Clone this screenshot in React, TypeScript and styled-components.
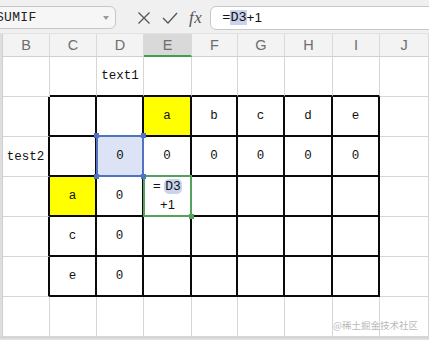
import React from "react";
import styled, { createGlobalStyle } from "styled-components";

const GlobalStyle = createGlobalStyle`
  html, body {
    margin: 0;
    padding: 0;
    background: #ffffff;
  }
  body {
    font-family: "Liberation Mono", "Noto Sans CJK SC", monospace;
  }
`;

const COLUMNS = ["B", "C", "D", "E", "F", "G", "H", "I", "J"];
const COL_WIDTHS = [47, 47, 47, 48, 46, 47, 48, 47, 49];
const ROW_COUNT = 7;

type CellData = {
  text?: string;
  fill?: string;
  selected?: boolean;
  editing?: boolean;
};

const YELLOW = "#ffff00";

const data: Record<string, CellData> = {
  "0-2": { text: "text1" },
  "1-3": { text: "a", fill: YELLOW },
  "1-4": { text: "b" },
  "1-5": { text: "c" },
  "1-6": { text: "d" },
  "1-7": { text: "e" },
  "2-0": { text: "test2" },
  "2-2": { text: "0", selected: true },
  "2-3": { text: "0" },
  "2-4": { text: "0" },
  "2-5": { text: "0" },
  "2-6": { text: "0" },
  "2-7": { text: "0" },
  "3-1": { text: "a", fill: YELLOW },
  "3-2": { text: "0" },
  "3-3": { editing: true },
  "4-1": { text: "c" },
  "4-2": { text: "0" },
  "5-1": { text: "e" },
  "5-2": { text: "0" },
};

// bordered table: rows 1..5, columns C..I
const inTable = (r: number, c: number) => r >= 1 && r <= 5 && c >= 1 && c <= 7;

const Frame = styled.div`
  width: 429px;
  height: 340px;
  overflow: hidden;
  display: flex;
  flex-direction: column;
  position: relative;
  background: #dedede;
`;

const Toolbar = styled.div`
  height: 34px;
  flex-shrink: 0;
  background: #f0f0f0;
  display: flex;
  align-items: center;
  border-bottom: 1px solid #e2e2e2;
  box-sizing: border-box;
`;

const NameBox = styled.div`
  width: 118px;
  height: 23px;
  margin-left: -2px;
  margin-top: 2px;
  box-sizing: border-box;
  border: 1px solid #c6c6c6;
  border-radius: 0 6px 6px 0;
  background: #f6f6f6;
  display: flex;
  align-items: center;
  justify-content: space-between;
  padding: 0 6px 0 0;
  font-family: "Liberation Mono", monospace;
  font-size: 13px;
  color: #222;
  letter-spacing: 0.3px;
  overflow: hidden;
`;

const NameText = styled.span`
  margin-left: -3px;
`;

const DropArrow = styled.span`
  width: 0;
  height: 0;
  border-left: 3px solid transparent;
  border-right: 3px solid transparent;
  border-top: 4px solid #9a9a9a;
`;

const IconGroup = styled.div`
  display: flex;
  align-items: center;
  gap: 11px;
  margin-left: 21px;
  margin-top: 2px;
`;

const FxLabel = styled.span`
  font-family: "Liberation Serif", serif;
  font-style: italic;
  font-size: 17px;
  color: #555;
  letter-spacing: 0.5px;
`;

const FormulaInput = styled.div`
  flex: 1;
  height: 24px;
  margin-left: 8px;
  margin-right: -8px;
  margin-top: 2px;
  box-sizing: border-box;
  border: 1px solid #c8c8c8;
  border-radius: 6px;
  background: #ffffff;
  display: flex;
  align-items: center;
  padding-left: 11px;
  font-family: "Liberation Mono", monospace;
  font-size: 13.5px;
  color: #111;
`;

const RefHighlight = styled.span<{ $round?: boolean }>`
  background: #c9d3ec;
  border-radius: ${({ $round }) => ($round ? "5px" : "0")};
  padding: ${({ $round }) => ($round ? "0 1px" : "0")};
`;

const SansPart = styled.span`
  font-family: "Liberation Sans", Arial, sans-serif;
`;

const Sheet = styled.div`
  margin-left: 2px;
  border-left: 1px solid #cfcfcf;
  background: #ffffff;
  display: grid;
  grid-template-columns: ${COL_WIDTHS.map((w) => `${w}px`).join(" ")};
  grid-template-rows: 23px repeat(${ROW_COUNT}, 40px);
  flex-shrink: 0;
`;

const HeaderCell = styled.div<{ $active?: boolean }>`
  box-sizing: border-box;
  background: ${({ $active }) => ($active ? "#d9d9d9" : "#f3f3f3")};
  border-right: 1px solid #dadada;
  border-bottom: ${({ $active }) =>
    $active ? "2px solid #3f9f4b" : "1px solid #d0d0d0"};
  display: flex;
  align-items: center;
  justify-content: center;
  font-family: "Liberation Sans", Arial, sans-serif;
  font-size: 14.5px;
  color: #6e6e6e;
  padding-top: ${({ $active }) => ($active ? "1px" : "0")};
`;

const Cell = styled.div<{
  $fill?: string;
  $rightDark?: boolean;
  $bottomDark?: boolean;
}>`
  position: relative;
  box-sizing: border-box;
  background: ${({ $fill }) => $fill || "#ffffff"};
  border-right: ${({ $rightDark }) =>
    $rightDark ? "2px solid #0a0a0a" : "1px solid #d6d6d6"};
  border-bottom: ${({ $bottomDark }) =>
    $bottomDark ? "2px solid #0a0a0a" : "1px solid #d6d6d6"};
  display: flex;
  align-items: center;
  justify-content: center;
  font-family: "Liberation Mono", monospace;
  font-size: 12.5px;
  color: #111;
`;

const SelectionBox = styled.div`
  position: absolute;
  top: -2px;
  left: -1px;
  right: -2px;
  bottom: -2px;
  border: 2px solid #4f72c2;
  background: #dce3f5;
  box-sizing: border-box;
  display: flex;
  align-items: center;
  justify-content: center;
`;

const EditBox = styled.div`
  position: absolute;
  top: -2px;
  left: -1px;
  right: -2px;
  bottom: -2px;
  border: 2px solid #56a15c;
  background: #ffffff;
  box-sizing: border-box;
  display: flex;
  flex-direction: column;
  align-items: center;
  justify-content: center;
  line-height: 18px;
  z-index: 2;
`;

const Handle = styled.span<{ $color: string; $x: "left" | "right"; $y: "top" | "bottom" }>`
  position: absolute;
  width: 5px;
  height: 5px;
  background: ${({ $color }) => $color};
  ${({ $x }) => $x}: -4px;
  ${({ $y }) => $y}: -4px;
  z-index: 3;
`;

const FormulaLine = styled.span`
  font-size: 13px;
  white-space: nowrap;
`;

const BottomShade = styled.div`
  flex: 1;
  background: linear-gradient(#cfcfcf, #e6e6e6);
`;

const Watermark = styled.div`
  position: absolute;
  right: 11px;
  bottom: 8px;
  font-family: "Noto Sans CJK SC", "Noto Sans", sans-serif;
  font-size: 9.5px;
  color: #b9b9b9;
  z-index: 5;
`;

const CloseIcon = () => (
  <svg width="14" height="14" viewBox="0 0 14 14">
    <path d="M1.5 1.5 L12.5 12.5 M12.5 1.5 L1.5 12.5" stroke="#555" strokeWidth="1.3" fill="none" />
  </svg>
);

const CheckIcon = () => (
  <svg width="16" height="14" viewBox="0 0 16 14">
    <path d="M1 7 L6 12 L15 2" stroke="#555" strokeWidth="1.3" fill="none" />
  </svg>
);

const renderCell = (r: number, c: number) => {
  const key = `${r}-${c}`;
  const cell = data[key] || {};
  const rightDark = inTable(r, c) || inTable(r, c + 1);
  const bottomDark = inTable(r, c) || inTable(r + 1, c);

  return (
    <Cell
      key={key}
      $fill={cell.fill}
      $rightDark={rightDark}
      $bottomDark={bottomDark}
    >
      {cell.selected ? (
        <SelectionBox>
          {cell.text}
          <Handle $color="#4f72c2" $x="left" $y="top" />
          <Handle $color="#4f72c2" $x="right" $y="top" />
          <Handle $color="#4f72c2" $x="left" $y="bottom" />
          <Handle $color="#4f72c2" $x="right" $y="bottom" />
        </SelectionBox>
      ) : cell.editing ? (
        <EditBox>
          <FormulaLine>
            <SansPart>= </SansPart>
            <RefHighlight $round>D3</RefHighlight>
          </FormulaLine>
          <FormulaLine>
            <SansPart>+1</SansPart>
          </FormulaLine>
          <Handle $color="#56a15c" $x="right" $y="bottom" />
        </EditBox>
      ) : (
        cell.text
      )}
    </Cell>
  );
};

const App: React.FC = () => {
  return (
    <>
      <GlobalStyle />
      <Frame>
        <Toolbar>
          <NameBox>
            <NameText>SUMIF</NameText>
            <DropArrow />
          </NameBox>
          <IconGroup>
            <CloseIcon />
            <CheckIcon />
            <FxLabel>fx</FxLabel>
          </IconGroup>
          <FormulaInput>
            =<RefHighlight>D3</RefHighlight>
            <SansPart>+1</SansPart>
          </FormulaInput>
        </Toolbar>
        <Sheet>
          {COLUMNS.map((col) => (
            <HeaderCell key={col} $active={col === "E"}>
              {col}
            </HeaderCell>
          ))}
          {Array.from({ length: ROW_COUNT }).map((_, r) =>
            COLUMNS.map((_, c) => renderCell(r, c))
          )}
        </Sheet>
        <BottomShade />
        <Watermark>@稀土掘金技术社区</Watermark>
      </Frame>
    </>
  );
};

export default App;
